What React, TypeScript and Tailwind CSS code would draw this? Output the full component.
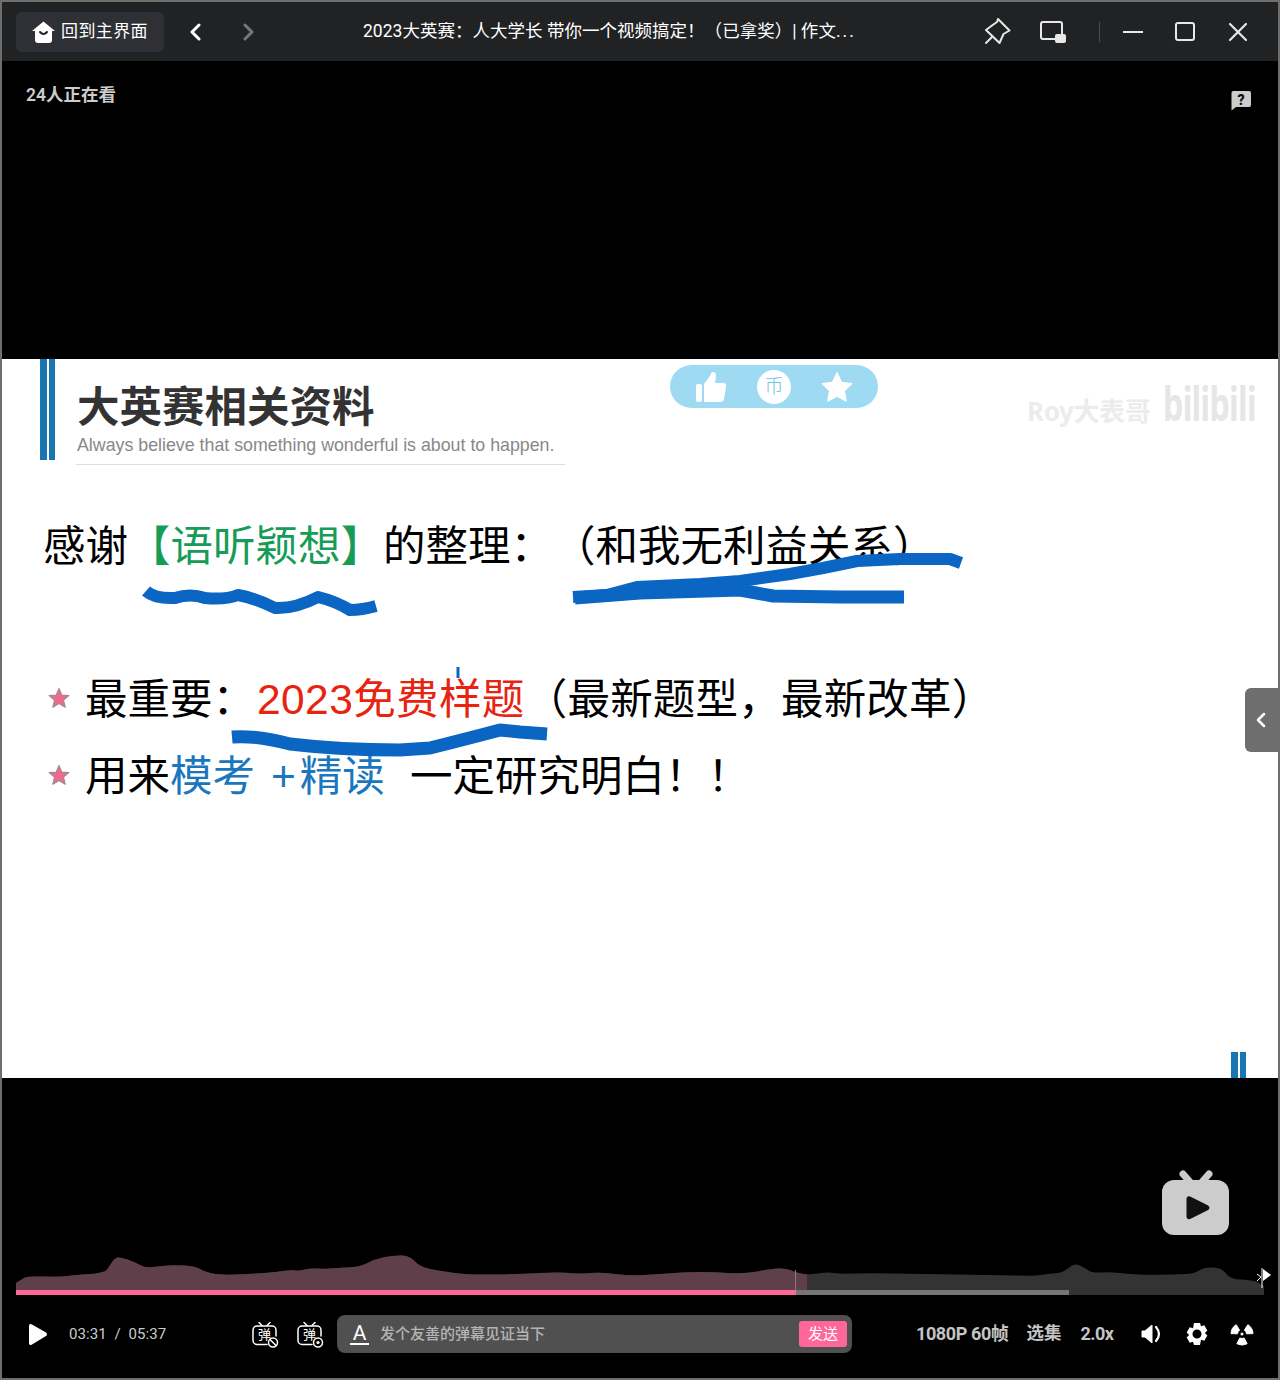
import React from "react";

const F = "font-['Roboto','Noto_Sans_CJK_SC',sans-serif]";
const S = "font-['Liberation_Sans','Noto_Sans_CJK_SC',sans-serif]";

const Star = () => (
  <svg width="22" height="22" viewBox="0 0 24 24" className="shrink-0 mt-[-5px]">
    <path d="M12 1.500l3 7.200 7.800.7-5.900 5 1.900 7.600L12 18l-6.800 4 1.900-7.600-5.900-5 7.800-.7z" fill="#ee6a8e" stroke="#9a8a90" strokeWidth="1.200" strokeLinejoin="round" />
  </svg>
);

const DanmakuIcon = ({ badge }: { badge: "off" | "set" }) => (
  <div className="relative w-[27px] h-[27px]">
    <svg width="27" height="27" viewBox="0 0 27 27" fill="none" stroke="#fff" strokeWidth="1.500" strokeLinecap="round" className="absolute inset-0">
      <path d="M7 1.500l3 3M18 1.500l-3 3" />
      <path d="M15 23.500H5a4 4 0 0 1-4-4V9a4 4 0 0 1 4-4h15a4 4 0 0 1 4 4v6" />
      <circle cx="21" cy="21.500" r="4.500" />
      {badge === "off" ? <path d="M18 18.500l6 6" /> : <circle cx="21" cy="21.500" r="1.600" fill="#fff" stroke="none" />}
    </svg>
    <span className={`absolute left-[6px] top-[6px] text-[13px] leading-[16px] text-white ${F}`}>弹</span>
  </div>
);

const pts: [number, number][] = [
  [16, 1283], [22, 1279], [28, 1276], [60, 1277], [75, 1275], [105, 1273], [110, 1265], [115, 1258], [120, 1257], [135, 1262], [145, 1268],
  [160, 1266], [175, 1265], [195, 1266], [205, 1272], [220, 1275], [250, 1274], [265, 1273], [275, 1272], [290, 1270], [300, 1271], [310, 1268],
  [325, 1269], [335, 1268], [360, 1267], [375, 1259], [395, 1255], [410, 1256], [420, 1267], [440, 1271], [470, 1275], [520, 1274], [560, 1272],
  [580, 1274], [600, 1272], [630, 1276], [660, 1274], [690, 1272], [710, 1272], [745, 1274], [770, 1269], [785, 1268], [795, 1272], [807, 1275],
  [828, 1272], [840, 1274], [870, 1273], [920, 1274], [1000, 1275], [1035, 1276], [1045, 1274], [1060, 1273], [1066, 1270], [1075, 1263], [1085, 1268],
  [1092, 1273], [1110, 1272], [1130, 1274], [1150, 1275], [1190, 1274], [1197, 1272], [1205, 1267], [1222, 1268], [1230, 1279], [1250, 1280], [1262, 1283],
];
const wavePts = (() => {
  let d = `M16 1295 L${pts[0][0]} ${pts[0][1]}`;
  for (let i = 1; i < pts.length - 1; i++) {
    const mx = (pts[i][0] + pts[i + 1][0]) / 2;
    const my = (pts[i][1] + pts[i + 1][1]) / 2;
    d += ` Q${pts[i][0]} ${pts[i][1]} ${mx} ${my}`;
  }
  return d + " L1264 1286 L1264 1295 Z";
})();

const blade = (deg: number) => {
  const c = (a: number, r: number) => {
    const t = (a * Math.PI) / 180;
    return `${(12 + r * Math.cos(t)).toFixed(2)} ${(12 + r * Math.sin(t)).toFixed(2)}`;
  };
  return `M${c(deg - 28, 4.5)} L${c(deg - 28, 11)} A11 11 0 0 1 ${c(deg + 28, 11)} L${c(deg + 28, 4.5)} A4.500 4.500 0 0 0 ${c(deg - 28, 4.5)} Z`;
};

export default function App() {
  return (
    <div className={`w-[1280px] h-[1380px] border-2 border-[#6e6e6e] bg-black flex flex-col overflow-hidden relative ${F}`}>
      {/* Title bar */}
      <div className="h-[59px] shrink-0 bg-[#202224] flex items-center pl-[14px] text-white">
        <div className="w-[148px] h-[40px] rounded-md bg-[#2e3035] flex items-center pl-[16px] gap-[6px]">
          <svg width="23" height="22" viewBox="0 0 23 22">
            <path d="M11.500 0.500L23 10h-3v9a3 3 0 0 1-3 3H6a3 3 0 0 1-3-3v-9H0z" fill="#fff" />
            <path d="M8 11q3.500 4 7 0" stroke="#202224" strokeWidth="2" fill="none" strokeLinecap="round" />
          </svg>
          <span className="text-[17px] leading-none tracking-[0.4px]">回到主界面</span>
        </div>
        <svg width="12" height="18" viewBox="0 0 12 18" fill="none" stroke="#fff" strokeWidth="3" strokeLinecap="round" strokeLinejoin="round" className="ml-[25px]">
          <path d="M10 2L3 9l7 7" />
        </svg>
        <svg width="12" height="18" viewBox="0 0 12 18" fill="none" stroke="#777" strokeWidth="3" strokeLinecap="round" strokeLinejoin="round" className="ml-[42px]">
          <path d="M2 2l7 7-7 7" />
        </svg>
        <div className="w-[497px] ml-[108px] text-[17.500px] leading-none whitespace-nowrap tracking-[0.02px]">
          2023大英赛：人大学长 带你一个视频搞定！（已拿奖）| 作文<span className="tracking-[2px]">...</span>
        </div>
        <svg width="27" height="27" viewBox="0 0 27 27" fill="none" stroke="#e8e8e8" strokeWidth="2" strokeLinejoin="round" strokeLinecap="round" className="ml-[124px]">
          <path d="M14 1L25.500 12.500 19.500 16 15.500 25 2 12 8 7.500 13 4z" />
          <path d="M2 25l6-6" />
        </svg>
        <div className="relative w-[26px] h-[22px] ml-[29px]">
          <div className="absolute left-0 top-0 w-[23px] h-[19px] border-2 border-[#e8e8e8] rounded-[3px]" />
          <div className="absolute right-0 bottom-0 w-[11px] h-[9px] bg-[#e8e8e8] rounded-[2px]" />
        </div>
        <div className="w-px h-[20px] bg-[#4a4c50] ml-[33px]" />
        <div className="w-[20px] h-[2px] bg-[#e8e8e8] ml-[23px]" />
        <div className="w-[20px] h-[19px] border-2 border-[#e8e8e8] rounded-[3px] ml-[32px]" />
        <svg width="20" height="20" viewBox="0 0 20 20" stroke="#e8e8e8" strokeWidth="2.200" strokeLinecap="round" className="ml-[33px]">
          <path d="M2 2l16 16M18 2L2 18" />
        </svg>
      </div>

      {/* Top black band */}
      <div className="h-[298px] shrink-0 bg-black flex items-start justify-between pl-[24px] pr-[26px] pt-[22px]">
        <span className="text-[17.500px] leading-[24px] font-semibold text-[#cccccc]">24人正在看</span>
        <svg width="22" height="20" viewBox="0 0 22 20" className="mt-[8px]">
          <path d="M3 0h16a2 2 0 0 1 2 2v12a2 2 0 0 1-2 2H6l-4.500 3.500V2A2 2 0 0 1 3 0z" fill="#cccccc" />
          <text x="11" y="13.500" textAnchor="middle" fontSize="14" fontWeight="900" fontFamily="Roboto" fill="#111">?</text>
        </svg>
      </div>

      {/* Slide */}
      <div className={`h-[719px] shrink-0 bg-white relative ${S}`}>
        <div className="flex pl-[38px]">
          <div className="flex gap-[2px] h-[101px]">
            <div className="w-[7px] bg-[#1a76b0]" />
            <div className="w-[6px] bg-[#1a76b0]" />
          </div>
          <div className="ml-[21px] w-[489px] h-[106px] border-b border-[#dddddd] pt-[21px]">
            <div className="text-[42.500px] leading-[56px] font-bold text-[#333333] pl-[1px] whitespace-nowrap">大英赛相关资料</div>
            <div className="text-[17.800px] leading-[22px] text-[#888888] whitespace-nowrap mt-[-2px] pl-[1px]">Always believe that something wonderful is about to happen.</div>
          </div>
        </div>

        <div className="mt-[50px] pl-[41px] flex text-[42.500px] leading-[64px] text-black whitespace-nowrap">
          <span>感谢</span>
          <span className="text-[#169c57]">【语听颖想】</span>
          <span>的整理：</span>
          <span>（和我无利益关系）</span>
        </div>

        <div className="mt-[89px] pl-[46px] flex items-center text-[42.500px] leading-[64px] text-black whitespace-nowrap">
          <Star />
          <span className="ml-[15px]">最重要：</span>
          <span className="text-[#e8230f] ml-[2px] tracking-[0.4px]">2023免费样题</span>
          <span className="tracking-[0.2px]">（最新题型，最新改革）</span>
        </div>
        <div className="mt-[13px] pl-[46px] flex items-center text-[42.500px] leading-[64px] text-black whitespace-nowrap">
          <Star />
          <span className="ml-[15px]">用来</span>
          <span className="text-[#1a76bd]">模考</span>
          <span className="text-[#1a76bd] ml-[16px] tracking-[4px]">+</span>
          <span className="text-[#1a76bd]">精读</span>
          <span className="ml-[25px]">一定研究明白！！</span>
        </div>

        {/* Hand-drawn strokes over the slide */}
        <svg width="1276" height="719" viewBox="0 0 1276 719" fill="none" className="absolute left-0 top-0 pointer-events-none">
          <g transform="translate(-2,-359)" stroke="#0a66c2" strokeLinejoin="round" strokeLinecap="butt">
            <path strokeWidth="12" d="M146 591 Q155 599 175 598 Q190 593 205 598 Q225 600 238 595 Q255 598 275 608 Q295 609 318 597 Q335 601 350 610 Q362 610 376 606" />
            <path strokeWidth="12" d="M573 597 L607 595 L637 587 L700 584 L740 581 L790 574 L823 568 L857 561 L900 559 L950 559 L961 563" />
            <path strokeWidth="13" d="M575 598 L640 593 L740 590 L773 596 L840 597 L904 597" />
            <path strokeWidth="13" d="M232 737 Q255 735 290 744 Q340 750 400 750 L430 748 Q470 738 500 730 L520 732 L547 734" />
            <path strokeWidth="3" d="M458 667v11" />
          </g>
          <rect x="1229" y="693" width="7" height="26" fill="#1a76b0" />
          <rect x="1238" y="693" width="6" height="26" fill="#1a76b0" />
        </svg>

        {/* Triple-action pill burned into the video */}
        <div className="absolute left-[668px] top-[6px] w-[208px] h-[43px] rounded-full bg-[#9edbf3] flex items-center pl-[25px]">
          <svg width="32" height="32" viewBox="0 0 32 32" fill="#fff">
            <rect x="1" y="13" width="6" height="18" rx="2" />
            <path d="M9 13l6-8q1-4 3-4 3 0 3 4l-1 7h8q4 0 3 4l-2 12q-.5 3-3.500 3H9z" />
          </svg>
          <div className="ml-[30px] w-[34px] h-[34px] rounded-full bg-white flex items-center justify-center">
            <span className="text-[#6fc5e6] text-[19px] leading-none font-light">币</span>
          </div>
          <svg width="32" height="30" viewBox="0 0 32 30" fill="#fff" className="ml-[30px]">
            <path d="M16 1l4.500 9.500 10 1.300-7.300 7 1.900 10L16 24l-9.100 4.800 1.900-10-7.300-7 10-1.300z" strokeLinejoin="round" stroke="#fff" strokeWidth="1.500" />
          </svg>
        </div>

        {/* Watermark */}
        <div className="absolute left-[1025px] top-[19px] flex items-end whitespace-nowrap">
          <span className="w-[136px] text-[26px] leading-[34px] font-bold text-[#ececec] font-['Noto_Sans','Noto_Sans_CJK_SC',sans-serif] tracking-[-0.4px]">Roy大表哥</span>
          <span className="w-[92px] text-[46px] leading-[50px] font-bold text-[#e6e6e6] font-['Noto_Sans',sans-serif] tracking-[-1px] scale-x-[0.7] origin-left">bilibili</span>
        </div>

        {/* Side tab */}
        <div className="absolute right-[-2px] top-[329px] w-[35px] h-[64px] bg-[#6e6e6e] rounded-l-md flex items-center justify-center pr-[3px]">
          <svg width="12" height="16" viewBox="0 0 12 16" fill="none" stroke="#fff" strokeWidth="2.500" strokeLinecap="round" strokeLinejoin="round">
            <path d="M9 2L3 8l6 6" />
          </svg>
        </div>
      </div>

      {/* Bottom black band */}
      <div className="flex-1 bg-black relative flex flex-col justify-end">
        <svg width="70" height="67" viewBox="0 0 70 67" className="absolute left-[1159px] top-[92px]">
          <path d="M22 4l7 8M48 4l-7 8" stroke="#cccccc" strokeWidth="7" strokeLinecap="round" />
          <rect x="1" y="10" width="67" height="55" rx="12" fill="#cccccc" />
          <path d="M27 29q0-2 2-1l17 8.500q2 1.200 0 2.500l-17 8.500q-2 1-2-1z" fill="#111" stroke="#111" strokeWidth="3" strokeLinejoin="round" />
        </svg>

        {/* Wave and progress */}
        <svg width="1276" height="50" viewBox="0 0 1276 50" className="absolute left-0 top-[170px]">
          <g transform="translate(-2,-1248)">
            <defs>
              <clipPath id="played"><rect x="0" y="1248" width="807" height="50" /></clipPath>
            </defs>
            <path d={wavePts} fill="#333333" />
            <path d={wavePts} fill="#5e3f4a" clipPath="url(#played)" />
            <rect x="795" y="1270" width="1" height="20" fill="#8a7a80" />
            <rect x="16" y="1290" width="780" height="5" fill="#ff6699" />
            <rect x="796" y="1290" width="273" height="5" fill="#757575" />
            <path d="M1262 1268v20" stroke="#fff" strokeWidth="1" />
            <path d="M1263 1269l8 6-8 6z" fill="#fff" />
            <path d="M1257 1274l4 3-4 4" stroke="#fff" strokeWidth="1" fill="none" />
          </g>
        </svg>

        {/* Control row */}
        <div className="h-[38px] mb-[25px] flex items-center pl-[26px] relative">
          <svg width="20" height="23" viewBox="0 0 20 23">
            <path d="M1 3q0-3 3-1.500l14 8q2 2 0 3.500L4 21.500Q1 23 1 20z" fill="#fff" />
          </svg>
          <span className="ml-[21px] w-[97px] text-[15px] leading-none text-[#cccccc] whitespace-nowrap tracking-[0.1px]">03:31&nbsp; /&nbsp; 05:37</span>
          <div className="ml-[86px] flex gap-[18px]">
            <DanmakuIcon badge="off" />
            <DanmakuIcon badge="set" />
          </div>
          <div className="ml-[13px] w-[515px] h-[38px] rounded-lg bg-[#505050] flex items-center pl-[13px] pr-[5px]">
            <div className="w-[19px] flex flex-col items-center">
              <span className="text-[21px] leading-[18px] text-white">A</span>
              <div className="w-[19px] h-[2px] bg-white mt-[1px]" />
            </div>
            <span className="ml-[11px] text-[15px] leading-none font-medium text-[#b4b4b4] flex-1">发个友善的弹幕见证当下</span>
            <div className="w-[48px] h-[26px] rounded-[3px] bg-[#ff6699] flex items-center justify-center text-[15px] leading-none text-white">发送</div>
          </div>
          <span className="ml-[64px] text-[18px] leading-none font-bold text-[#c4c4c4] whitespace-nowrap tracking-[-0.4px]">1080P 60帧</span>
          <span className="ml-[18px] text-[17.500px] leading-none font-bold text-[#c4c4c4] whitespace-nowrap">选集</span>
          <span className="ml-[19px] text-[18px] leading-none font-bold text-[#c4c4c4] whitespace-nowrap tracking-[-0.5px]">2.0x</span>
          <svg width="22" height="20" viewBox="0 0 22 20" className="ml-[27px]" fill="none">
            <path d="M1 7h3l7-6v18l-7-6H1z" fill="#fff" stroke="#fff" strokeLinejoin="round" />
            <path d="M15 3q6 7 0 14" stroke="#fff" strokeWidth="2.200" strokeLinecap="round" />
          </svg>
          <svg width="24" height="24" viewBox="0 0 24 24" className="ml-[22px]">
            <path fillRule="evenodd" fill="#fff" d="M9 1h6l1 3.300 3.300-1 3 5.200-2.400 2.500 2.400 2.500-3 5.200-3.300-1L15 23H9l-1-3.300-3.300 1-3-5.200L4.100 13 1.700 10.500l3-5.200 3.300 1zM12 7.500a4.500 4.500 0 1 0 0 9 4.500 4.500 0 0 0 0-9z" />
          </svg>
          <svg width="24" height="24" viewBox="0 0 24 24" className="ml-[21px]" fill="#fff" stroke="#fff" strokeWidth="1" strokeLinejoin="round">
            <path d={blade(210)} />
            <path d={blade(330)} />
            <path d={blade(90)} />
            <circle cx="12" cy="12" r="1.500" stroke="none" />
          </svg>
        </div>
      </div>
    </div>
  );
}
